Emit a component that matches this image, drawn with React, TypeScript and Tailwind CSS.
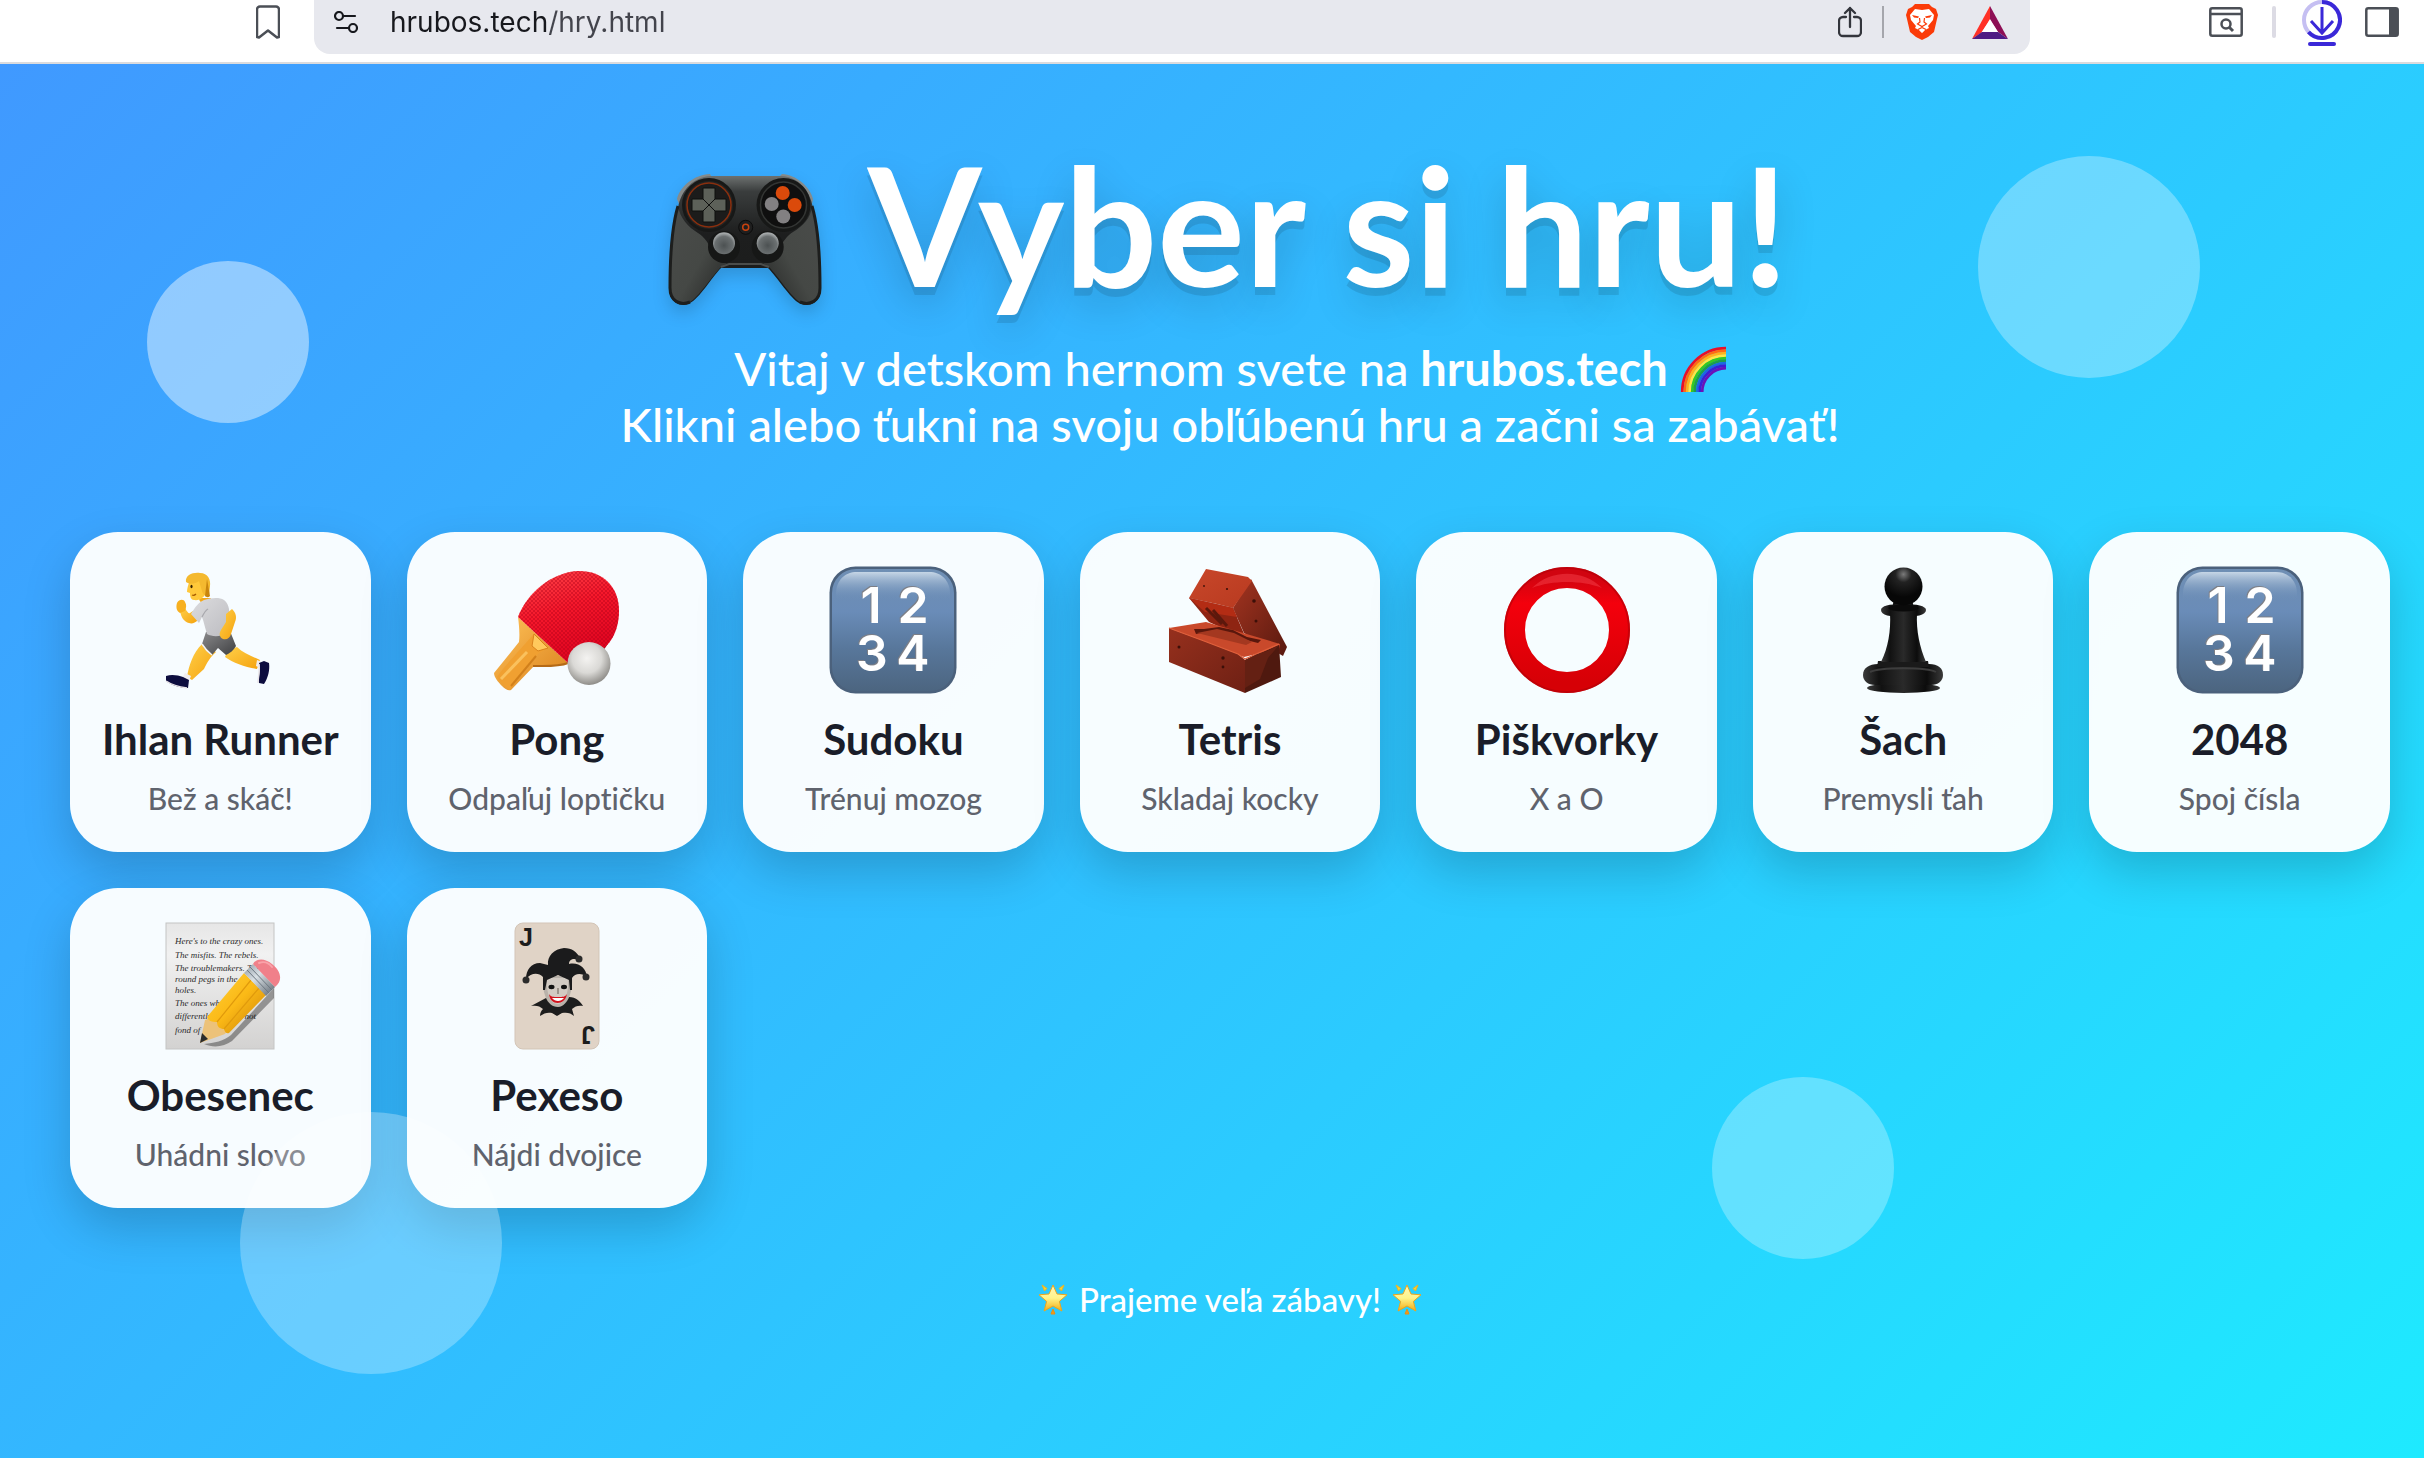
import type { ReactNode } from "react";

type Game = {
  name: string;
  desc: string;
  href: string;
  icon: ReactNode;
};

/* ---------- emoji pictures ---------- */

function Gamepad({ className }: { className?: string }) {
  return (
    <svg viewBox="0 0 160 160" className={className} aria-hidden="true">
      <defs>
        <linearGradient id="padTop" x1="0" y1="0" x2="0" y2="1">
          <stop offset="0" stopColor="#6d7170" />
          <stop offset="0.12" stopColor="#3a3d3d" />
          <stop offset="0.45" stopColor="#1d1e1e" />
          <stop offset="1" stopColor="#1b1c1b" />
        </linearGradient>
        <linearGradient id="padGripL" x1="0" y1="0" x2="1" y2="1">
          <stop offset="0" stopColor="#4a4c4a" />
          <stop offset="0.55" stopColor="#454845" />
          <stop offset="1" stopColor="#232423" />
        </linearGradient>
        <linearGradient id="padGripR" x1="1" y1="0" x2="0" y2="1">
          <stop offset="0" stopColor="#4a4c4a" />
          <stop offset="0.55" stopColor="#454845" />
          <stop offset="1" stopColor="#232423" />
        </linearGradient>
        <radialGradient id="padStick" cx="0.5" cy="0.6" r="0.55">
          <stop offset="0" stopColor="#4c5152" />
          <stop offset="0.75" stopColor="#6b7071" />
          <stop offset="1" stopColor="#a3a7a8" />
        </radialGradient>
      </defs>
      <path d="M13 39C16 26 30 15 46 14l2 4-20 12-13 14zM149 39c-3-13-17-24-31-25l-4 4 22 12 12 14z" fill="#858a8a" />
      <path
        d="M46 16h72c16 1 28 14 31 32 5 18 8 54 8 80 0 14-11 20-22 15-8-4-22-26-31-35H57c-9 9-22 31-31 35-10 5-21-1-21-15 0-26 3-62 9-80 3-18 16-31 32-32z"
        fill="url(#padTop)"
      />
      <path d="M14 46C8 66 6 100 6 128c0 13 10 18 20 14 8-4 22-26 31-35l6-4c-10 0-16-6-17-14-1-6-6-12-12-16C24 67 16 58 14 46z" fill="url(#padGripL)" />
      <path d="M148 46c6 20 8 54 8 82 0 13-10 18-20 14-8-4-22-26-31-35l-6-4c10 0 16-6 17-14 1-6 8-14 13-17 10-6 18-14 19-26z" fill="url(#padGripR)" />
      <path d="M14 46C8 66 6 100 6 128c0 13 10 18 20 14M148 46c6 20 8 54 8 82 0 13-10 18-20 14" fill="none" stroke="#1d1e1d" strokeWidth="3" />
      <path d="M57 107l8-3h32l8 3" fill="none" stroke="#4b4d4b" strokeWidth="2" />
      <circle cx="45" cy="45" r="27" fill="#171817" />
      <circle cx="45" cy="45" r="24" fill="#232423" />
      <circle cx="45" cy="45" r="22" fill="#1c1c1b" stroke="#8a2f0e" strokeWidth="1.5" />
      <g fill="#5d6159" stroke="#0f100f" strokeWidth="1" strokeLinejoin="round">
        <path d="M39 28h12v11l-6 6-6-6z" />
        <path d="M39 62h12V51l-6-6-6 6z" />
        <path d="M28 39h11l6 6-6 6H28z" />
        <path d="M62 39H51l-6 6 6 6h11z" />
      </g>
      <circle cx="119.500" cy="45" r="27" fill="#171817" />
      <circle cx="119.500" cy="45" r="23" fill="#0f0f0f" stroke="#333533" strokeWidth="1.500" />
      <circle cx="118.700" cy="33" r="7" fill="#db4a0b" />
      <circle cx="130.700" cy="45" r="7" fill="#db4a0b" />
      <circle cx="107.700" cy="44" r="7" fill="#828082" />
      <circle cx="119.300" cy="56.500" r="7" fill="#828082" />
      <circle cx="81.700" cy="67.300" r="7" fill="#1f1f1f" stroke="#0c0c0c" />
      <circle cx="81.700" cy="67.300" r="3" fill="none" stroke="#c8420f" strokeWidth="1.500" />
      <circle cx="60" cy="87" r="16" fill="#161716" />
      <circle cx="103.700" cy="87" r="16" fill="#161716" />
      <circle cx="60" cy="83.300" r="11" fill="url(#padStick)" />
      <circle cx="103.700" cy="83.300" r="11" fill="url(#padStick)" />
    </svg>
  );
}

function Rainbow({ className }: { className?: string }) {
  const bands = ["#e8102a", "#ff6a13", "#ffb21e", "#ffe545", "#35c921", "#1f9e4a", "#1a6ae0", "#3b1fd6", "#6b12b8"];
  return (
    <svg viewBox="0 0 46 46" className={className} aria-hidden="true">
      {bands.map((c, i) => {
        const r = 43.8 - i * 2.5;
        return <path key={c} d={`M${46 - r} 46A${r} ${r} 0 0 1 46 ${46 - r}`} fill="none" stroke={c} strokeWidth="2.7" />;
      })}
    </svg>
  );
}

function Star({ className }: { className?: string }) {
  return (
    <svg viewBox="0 0 32 32" className={className} aria-hidden="true">
      <defs>
        <linearGradient id="starFill" x1="0" y1="0" x2="0" y2="1">
          <stop offset="0" stopColor="#fff6b8" />
          <stop offset="0.5" stopColor="#fff48a" />
          <stop offset="1" stopColor="#f3ac15" />
        </linearGradient>
      </defs>
      <path d="M5 2l5 3.500-2.500 2.500zM27 2l-5 3.500 2.500 2.500z" fill="#f9d232" stroke="#eab526" strokeLinejoin="round" />
      <path d="M16 26l2 5h-4z" fill="#f09a18" stroke="#e88f14" strokeLinejoin="round" />
      <path
        d="M16 2l4 9 10 .8-7.600 6.600 2.500 9.600L16 23l-8.900 5 2.500-9.600L2 11.800l10-.8z"
        fill="url(#starFill)"
        stroke="#eda51c"
        strokeWidth="1"
        strokeLinejoin="round"
      />
    </svg>
  );
}

function Runner() {
  return (
    <svg viewBox="0 0 128 128" className="size-32" aria-hidden="true">
      <defs>
        <linearGradient id="skin" x1="0" y1="0" x2="1" y2="1">
          <stop offset="0" stopColor="#ffd04a" />
          <stop offset="1" stopColor="#f5a20d" />
        </linearGradient>
        <linearGradient id="shirt" x1="0" y1="0" x2="1" y2="1">
          <stop offset="0" stopColor="#dcdcde" />
          <stop offset="1" stopColor="#bdbdc2" />
        </linearGradient>
        <linearGradient id="shorts" x1="0" y1="0" x2="1" y2="1">
          <stop offset="0" stopColor="#8b8b8d" />
          <stop offset="1" stopColor="#3f4042" />
        </linearGradient>
      </defs>
      <path d="M72 84l9-3c6 6 14 9 23 13l-3 9c-12-2-24-6-32-12z" fill="url(#skin)" />
      <path d="M101 94l5 2-2 6-4-2z" fill="#f1eef0" />
      <path d="M103 97l5-2 5 2c1 7-1 15-5 21l-5-1c-1-4 2-13 0-20z" fill="#0d0d3f" />
      <path d="M103 98c1 7-1 14-1 19" fill="none" stroke="#e9e4e8" strokeWidth="1.500" />
      <path d="M46 78l14 8c-6 5-9 11-12 17l-12 11-5-3c2-12 6-24 15-33z" fill="url(#skin)" />
      <path d="M29 107l6 3-2 5-7-3z" fill="#f1eef0" />
      <path d="M10 110c5-2 12-1 17 1l6 3-1 8c-8 0-17-3-22-7z" fill="#0d0d3f" />
      <path d="M10 115c6 4 14 6 21 7" fill="none" stroke="#e9e4e8" strokeWidth="1.500" />
      <path d="M50 66l24-1c2 5 4 10 6 15-3 5-6 7-10 9l-8-7-6 7c-5-3-8-6-10-11z" fill="url(#shorts)" />
      <path d="M46 78c3 5 6 8 10 11" fill="none" stroke="#f4f4f4" strokeWidth="1.500" />
      <path d="M37 45l5 9c-3 3-6 4-9 3-5-1-8-6-9-12l5-3c2 4 4 6 5 5z" fill="url(#skin)" />
      <path d="M21 37c2-4 7-4 8-1 2 3 1 6 0 9l-5 2c-4-2-4-7-3-10z" fill="#f7b020" />
      <path d="M43 32h12c-1 4-3 6-6 5-4 0-6-2-6-5z" fill="#f3a91a" />
      <path d="M48 34c7-2 15-3 20 0 4 3 6 9 5 15l-2 18c-6 4-15 4-20 1-2-6-3-12-5-17l-3 6-8-9c4-7 8-12 13-14z" fill="url(#shirt)" />
      <path d="M46 51c2-4 4-7 6-8" fill="none" stroke="#a9a9ae" strokeWidth="1.200" />
      <path d="M70 48l6-5c4 4 5 8 3 13l-4 12c-1 4-4 6-8 5-4-2-4-6-2-9l5-8z" fill="url(#skin)" />
      <path d="M34 14c-2 5-3 9-3 12l3 1c0 4 1 7 4 7 6 1 11-3 13-9V12z" fill="#ffc83a" />
      <path d="M30 16C29 9 37 6 44 7c8 0 11 7 10 13l-1 9c-4 1-6 0-7-4l-3-10c-4 3-9 4-13 1z" fill="#f4b92f" />
      <path d="M51 13l3 17c-2 2-4 1-5 0z" fill="#c9850d" />
      <ellipse cx="35.500" cy="20.500" rx="1.100" ry="1.800" fill="#3a2300" />
      <path d="M36 29c2 1 3 0 4-1" fill="none" stroke="#a85c00" strokeWidth="1.300" />
    </svg>
  );
}

function Paddle() {
  return (
    <svg viewBox="0 0 128 128" className="size-32" aria-hidden="true">
      <defs>
        <linearGradient id="rubber" x1="0" y1="0" x2="0.400" y2="1">
          <stop offset="0" stopColor="#fd4a4d" />
          <stop offset="0.5" stopColor="#f6182b" />
          <stop offset="1" stopColor="#e00420" />
        </linearGradient>
        <linearGradient id="wood" x1="0" y1="0" x2="1" y2="1">
          <stop offset="0" stopColor="#ffc35a" />
          <stop offset="1" stopColor="#d9801b" />
        </linearGradient>
        <radialGradient id="ball" cx="0.45" cy="0.38" r="0.62">
          <stop offset="0" stopColor="#f4f3f1" />
          <stop offset="0.55" stopColor="#dad9d6" />
          <stop offset="1" stopColor="#8f8d89" />
        </radialGradient>
        <pattern id="dots" width="4" height="4" patternUnits="userSpaceOnUse">
          <circle cx="1" cy="1" r="0.900" fill="#b00018" opacity="0.6" />
          <circle cx="3" cy="3" r="0.900" fill="#b00018" opacity="0.6" />
        </pattern>
      </defs>
      <path d="M25 51L75 97c-10 4-22 3-33 2L18 124c-3 1-6-1-9-4-4-4-8-9-8-13l25-31c1-8 0-17-1-25z" fill="url(#wood)" />
      <path d="M41 68l14 14-9 5c-10 9-20 24-29 37-4-2-10-8-13-13 9-13 24-28 35-41z" fill="#f0a031" />
      <path d="M41 68l14 14-10 3-6-5z" fill="#ffc95c" stroke="#d9821c" strokeWidth="1" />
      <path d="M34 86L8 113" stroke="#ffcf70" strokeWidth="3" opacity="0.7" />
      <path d="M43 90L18 120" stroke="#c77412" strokeWidth="2" opacity="0.7" />
      <path d="M75 97c-10 4-22 3-35 3" fill="none" stroke="#b56a17" strokeWidth="2" />
      <path d="M120 61c-1 11-7 22-15 29l-28 6 5-9z" fill="#a80a1c" />
      <path d="M25 51C34 27 58 7 84 5c25-1 42 15 42 40 0 16-6 33-21 41l-30 11z" fill="url(#rubber)" />
      <path d="M25 51C34 27 58 7 84 5c25-1 42 15 42 40 0 16-6 33-21 41l-30 11z" fill="url(#dots)" />
      <circle cx="96" cy="97.500" r="21.500" fill="url(#ball)" />
    </svg>
  );
}

function Numbers() {
  return (
    <svg viewBox="0 0 128 128" className="size-32" aria-hidden="true">
      <defs>
        <linearGradient id="keyFill" x1="0" y1="0" x2="0" y2="1">
          <stop offset="0" stopColor="#6f8fb4" />
          <stop offset="0.35" stopColor="#6a8cb8" />
          <stop offset="0.65" stopColor="#58779b" />
          <stop offset="1" stopColor="#4c6580" />
        </linearGradient>
        <linearGradient id="keyShine" x1="0" y1="0" x2="0" y2="1">
          <stop offset="0" stopColor="#c6d6e6" />
          <stop offset="1" stopColor="#6b8db7" stopOpacity="0" />
        </linearGradient>
      </defs>
      <rect x="0.500" y="0.500" width="127" height="127" rx="26" fill="#4b617c" />
      <rect x="3" y="3" width="122" height="122" rx="24" fill="url(#keyFill)" />
      <path d="M7 34V28C7 14 16 6 28 6h72c12 0 21 8 21 22v6z" fill="url(#keyShine)" />
      <g
        fill="#fff"
        className="font-['Inter',sans-serif] text-[50px] font-semibold [text-shadow:-1px_-1px_0_#7d7f86]"
        textAnchor="middle"
      >
        <text x="42" y="57">1</text>
        <text x="84" y="57">2</text>
        <text x="43" y="105">3</text>
        <text x="84" y="105">4</text>
      </g>
    </svg>
  );
}

function Bricks() {
  return (
    <svg viewBox="0 0 128 128" className="size-32" aria-hidden="true">
      <defs>
        <linearGradient id="brickTop" x1="0" y1="0" x2="1" y2="1">
          <stop offset="0" stopColor="#c8472a" />
          <stop offset="1" stopColor="#b83a20" />
        </linearGradient>
        <linearGradient id="brickSide" x1="0" y1="0" x2="1" y2="1">
          <stop offset="0" stopColor="#a33420" />
          <stop offset="1" stopColor="#59190f" />
        </linearGradient>
        <linearGradient id="brickFront" x1="0" y1="0" x2="1" y2="1">
          <stop offset="0" stopColor="#96301d" />
          <stop offset="1" stopColor="#6e2014" />
        </linearGradient>
      </defs>
      <path d="M85 13l36 68-4 9-39-23-11-25z" fill="url(#brickSide)" />
      <path d="M40 3l42 8 4 4-19 27-16-4-28-6z" fill="url(#brickTop)" />
      <path d="M23 32l27 6 17 4 12 28-12-3-24-11z" fill="#8e2412" />
      <path d="M23 32l27 6 17 4 4 9-32-5z" fill="#b32c14" />
      <path d="M40 42l16 16M47 44l14 16" stroke="#5c180c" strokeWidth="3" />
      <path d="M3 62l37-6 74 22-1 5-35 8-40-15z" fill="#c9492b" />
      <path d="M28 63l10 0 15-2 14 3 14 7 14 3-3 3-12-3-12-6-18-4-20 4z" fill="#5a170c" />
      <path d="M31 67l20-4 17 4 18 9-6 3z" fill="#a43820" />
      <path d="M3 62l35 13 34 13 7 6v33L3 96z" fill="url(#brickFront)" />
      <path d="M113 79l2 32-36 16V94z" fill="#4f190f" />
      <path d="M113 79l-12 6-11 3-11 6v28l15-9 8-21z" fill="#642013" />
      <path d="M3 62l35 13 34 13 7 5 11-5 23-10" fill="none" stroke="#e0603c" strokeWidth="1.200" />
      <g fill="#3c0f08">
        <circle cx="13" cy="81" r="1.500" />
        <circle cx="57" cy="92" r="1.700" />
        <circle cx="57" cy="101" r="1.400" />
        <circle cx="88" cy="35" r="1.800" />
        <circle cx="90" cy="55" r="1.500" />
        <circle cx="38" cy="20" r="0.900" />
        <circle cx="61" cy="23" r="1.100" />
      </g>
    </svg>
  );
}

function RedCircle() {
  return (
    <svg viewBox="0 0 128 128" className="size-32" aria-hidden="true">
      <defs>
        <linearGradient id="ring" x1="0" y1="0" x2="0" y2="1">
          <stop offset="0" stopColor="#d10410" />
          <stop offset="0.250" stopColor="#f4000c" />
          <stop offset="1" stopColor="#d60006" />
        </linearGradient>
      </defs>
      <circle cx="64" cy="64" r="52.500" fill="none" stroke="url(#ring)" strokeWidth="21" />
      <circle cx="64" cy="64" r="62" fill="none" stroke="#b30009" strokeWidth="2" opacity="0.600" />
      <path d="M29 22C48 3 80 3 99 22c-20-8-50-8-70 0z" fill="#f5404a" opacity="0.500" />
    </svg>
  );
}

function Pawn() {
  return (
    <svg viewBox="0 0 128 128" className="size-32" aria-hidden="true">
      <defs>
        <radialGradient id="pawnHead" cx="0.500" cy="0.180" r="0.600">
          <stop offset="0" stopColor="#7a7a7a" />
          <stop offset="0.350" stopColor="#222" />
          <stop offset="1" stopColor="#070707" />
        </radialGradient>
        <linearGradient id="pawnBody" x1="0" y1="0" x2="1" y2="0">
          <stop offset="0" stopColor="#3a3a3a" />
          <stop offset="0.200" stopColor="#111" />
          <stop offset="0.500" stopColor="#2a2a2a" />
          <stop offset="0.800" stopColor="#0c0c0c" />
          <stop offset="1" stopColor="#3a3a3a" />
        </linearGradient>
      </defs>
      <ellipse cx="64.500" cy="122" rx="36.500" ry="5" fill="url(#pawnBody)" />
      <path d="M24 109c0-7 6-11 15-11h51c9 0 14 4 14 11 0 6-5 10-12 10H36c-7 0-12-4-12-10z" fill="url(#pawnBody)" />
      <path d="M31 106c10-5 57-5 66 0" stroke="#3d3d3d" strokeWidth="2" fill="none" />
      <path d="M38 101l1-6h50l1 6z" fill="#1a1a1a" />
      <path d="M51 47h27c-1 18 3 35 9 49H42c7-14 10-31 9-49z" fill="url(#pawnBody)" />
      <path d="M55 33h18l2 10H53z" fill="#0b0b0b" />
      <path d="M42 44c0-4 8-6 22-6s23 2 23 6c0 5-10 7-23 7s-22-2-22-7z" fill="url(#pawnBody)" />
      <ellipse cx="64.500" cy="42" rx="15" ry="3.500" fill="#0a0a0a" />
      <circle cx="64.500" cy="20.500" r="19" fill="url(#pawnHead)" />
    </svg>
  );
}

function Memo() {
  const lines: [number, string][] = [
    [22, "Here's to the crazy ones."],
    [36, "The misfits. The rebels."],
    [49, "The troublemakers. The"],
    [60, "round pegs in the"],
    [71, "holes."],
    [84, "The ones who see"],
    [97, "differently. They're not"],
    [111, "fond of"],
  ];
  return (
    <svg viewBox="0 0 128 128" className="size-32" aria-hidden="true">
      <defs>
        <linearGradient id="paper" x1="0" y1="0" x2="0" y2="1">
          <stop offset="0" stopColor="#e6e6e6" />
          <stop offset="0.250" stopColor="#f1f1f1" />
          <stop offset="1" stopColor="#d3d2d1" />
        </linearGradient>
        <linearGradient id="pencil" x1="0" y1="0" x2="1" y2="1">
          <stop offset="0" stopColor="#ffd23c" />
          <stop offset="0.500" stopColor="#fbb916" />
          <stop offset="1" stopColor="#c97f06" />
        </linearGradient>
        <linearGradient id="ferrule" x1="0" y1="0" x2="1" y2="1">
          <stop offset="0" stopColor="#8e99a3" />
          <stop offset="0.400" stopColor="#d9e0e5" />
          <stop offset="1" stopColor="#59626b" />
        </linearGradient>
      </defs>
      <rect x="10" y="1" width="108" height="126" fill="url(#paper)" stroke="#c4c4c4" />
      <g fill="#2b2b2b" className="font-['Liberation_Serif',serif] text-[9px] italic">
        {lines.map(([y, text]) => (
          <text key={y} x="19" y={y}>{text}</text>
        ))}
      </g>
      <path d="M48 122c10-1 20-3 27-9l43-47v10l-42 43c-8 6-19 7-28 3z" fill="#000" opacity="0.350" />
      <path d="M44 121l5-23 9-4 14 14-3 4z" fill="#ecc27a" />
      <path d="M44 121l2-10 6 6z" fill="#2b2b2b" />
      <path d="M88 51l22 22-37 38c-2 1-4 0-5-4-4 0-7-2-7-7-5 0-9-1-10-5z" fill="url(#pencil)" />
      <path d="M95 58l-34 42M103 66l-35 41" stroke="#e09a0c" strokeWidth="1.200" />
      <path d="M97 42l22 23-9 9-22-23z" fill="url(#ferrule)" />
      <path d="M94 45l22 23M91 48l22 23" stroke="#6d7780" strokeWidth="1" />
      <path d="M97 42c3-6 12-6 19 0 8 6 12 16 3 23z" fill="#f0808a" />
      <path d="M103 41c5-2 10 0 13 4" fill="none" stroke="#f9a3aa" strokeWidth="2" strokeLinecap="round" />
    </svg>
  );
}

function Joker() {
  return (
    <svg viewBox="0 0 128 128" className="size-32" aria-hidden="true">
      <rect x="22" y="1" width="84" height="126" rx="8" fill="#e0d3c6" stroke="#d3c5b7" />
      <g fill="#1c1c1c" className="font-['Liberation_Sans',sans-serif] text-[25px] font-bold">
        <text x="26" y="24">J</text>
        <text x="26" y="24" transform="rotate(180 64 64)">J</text>
      </g>
      <path d="M53 76l-15 8c5-1 9 0 12 3-2 2-3 4-3 7 4-3 8-4 12-3l5 3 5-3c5-1 9 0 12 3l-2-7c3-3 7-4 11-3-2-4-7-9-14-9z" fill="#1d1d1d" />
      <path d="M50 54h29c1 13-3 30-14 31-12 0-16-16-15-31z" fill="#b9b2aa" />
      <path d="M54 56h21c1 12-2 25-10 26-9 0-12-14-11-26z" fill="#d2cbc3" />
      <path
        d="M33 57c0-9 5-16 14-16l8 2c-1-9 6-16 16-17 8 0 13 4 16 10l-2 2c-4-2-9-1-9 4 10-2 17 4 18 13-5-4-12-4-15 1v12h-2l-1-10-11-5-11 5-2 10h-2V55c-5-5-12-4-17 2z"
        fill="#1b1b1c"
      />
      <circle cx="33" cy="58" r="3.500" fill="#2b2b2b" />
      <circle cx="86" cy="37" r="3.500" fill="#2b2b2b" />
      <circle cx="93" cy="55" r="3.500" fill="#2b2b2b" />
      <ellipse cx="58.500" cy="65" rx="3" ry="2.200" fill="#111" />
      <ellipse cx="71" cy="65" rx="3" ry="2.200" fill="#111" />
      <path d="M65 66v6" stroke="#9c948b" strokeWidth="2" />
      <path d="M56 72c1 12 16 12 18 0-2 3-4 3-9 3s-7 0-9-3z" fill="#d3121d" />
      <path d="M59 76c3 4 9 4 12 0z" fill="#fff" />
    </svg>
  );
}

/* ---------- toolbar icons ---------- */

function BraveLion() {
  return (
    <svg viewBox="0 0 32 36" className="h-9 w-8" aria-hidden="true">
      <path d="M9 0h14l3 3 4 2 2 6-1 4-3 13-6 5-6 3-6-3-6-5L1 15l-1-4 2-6 4-2z" fill="#fb3b08" />
      <path d="M9 5l7 1 7-1 5 6-1 5-5 6 1 2-4 2-3 3-3-3-4-2 1-2-5-6-1-5z" fill="#fff" />
      <path d="M6 11l7 1.500-1 1.500-4-.5zM26 11l-7 1.500 1 1.500 4-.5z" fill="#fb3b08" />
      <path d="M13.500 14l.5 4-2.500 2 4.500 2.500 4.500-2.500-2.500-2 .5-4" fill="none" stroke="#fb3b08" strokeWidth="1.200" />
      <path d="M16 22v2M12 25.500l4-2 4 2" fill="none" stroke="#fb3b08" strokeWidth="1.200" />
      <path d="M16 25l2.500 1.300L16 28.500l-2.500-2.200z" fill="#fff" />
    </svg>
  );
}

function BatTriangle() {
  return (
    <svg viewBox="0 0 36 33" className="h-[33px] w-9" aria-hidden="true">
      <path d="M18 0v14L9 27 0 33z" fill="#ff3127" />
      <path d="M18 0l18 33-10-7-8-12z" fill="#8e0f55" />
      <path d="M0 33l10-7h16l10 7z" fill="#4f1b83" />
      <path d="M18 13l8 13H10z" fill="#fff" />
    </svg>
  );
}

function Toolbar() {
  return (
    <header className="flex h-16 items-start border-b-2 border-[#dadbde] bg-white pl-64 pr-[25px]">
      <button type="button" aria-label="Záložka" className="flex h-11 w-6 items-center">
        <svg viewBox="0 0 24 34" className="h-[34px] w-6" fill="none" stroke="#4b4f56" strokeWidth="2.500" strokeLinejoin="round">
          <path d="M4 1.500h16a3 3 0 0 1 3 3V32l-2 .5-9-7-9 7-2-.5V4.500a3 3 0 0 1 3-3z" />
        </svg>
      </button>
      <div className="ml-[34px] flex h-[54px] flex-1 items-center rounded-b-2xl bg-[#e7e8ee] pb-[10px] pl-5 pr-[22px]">
        <button type="button" aria-label="Informácie o stránke" className="w-6">
          <svg viewBox="0 0 24 22" className="h-[22px] w-6" fill="none" stroke="#17181d" strokeWidth="2.200" strokeLinecap="round">
            <circle cx="5" cy="5" r="4" />
            <path d="M10 5h11" />
            <circle cx="19" cy="17" r="4" />
            <path d="M3 17h11" />
          </svg>
        </button>
        <input
          type="text"
          aria-label="Adresa"
          defaultValue="hrubos.tech/hry.html"
          className="ml-8 h-10 min-w-0 flex-1 bg-[linear-gradient(90deg,#17181d_157px,#43444c_157px)] bg-clip-text font-['Inter',sans-serif] text-[28px] leading-10 text-transparent outline-none"
        />
        <button type="button" aria-label="Zdieľať" className="w-6">
          <svg viewBox="0 0 24 32" className="h-8 w-6" fill="none" stroke="#33353c" strokeWidth="2.300" strokeLinecap="round" strokeLinejoin="round">
            <path d="M8 11H5a4 4 0 0 0-4 4v11a4 4 0 0 0 4 4h14a4 4 0 0 0 4-4V15a4 4 0 0 0-4-4h-3M12 21V2M7 7l5-5 5 5" />
          </svg>
        </button>
        <span className="ml-5 h-8 w-[2px] bg-[#a5a6ac]" />
        <button type="button" aria-label="Brave Shields" className="ml-[22px]">
          <BraveLion />
        </button>
        <button type="button" aria-label="Brave Rewards" className="ml-[34px]">
          <BatTriangle />
        </button>
      </div>
      <div className="ml-[179px] flex h-11 items-center">
        <button type="button" aria-label="Hľadať na karte">
          <svg viewBox="0 0 34 30" className="h-[30px] w-[34px]" fill="none" stroke="#4b4f56" strokeWidth="2.500">
            <rect x="1.300" y="1.300" width="31.400" height="27.400" rx="2" />
            <path d="M1 7h32" />
            <circle cx="17" cy="17" r="4.500" />
            <path d="M20 20l4 4" strokeWidth="3" />
          </svg>
        </button>
        <span className="ml-[29px] h-8 w-1 rounded-full bg-[#dcdbe4]" />
        <button type="button" aria-label="Stiahnuté súbory" className="ml-[26px]">
          <svg viewBox="0 0 40 48" className="h-12 w-10" fill="none" stroke="#3a28d8" strokeWidth="4">
            <circle cx="20" cy="22" r="18" stroke="#c5bff2" />
            <path d="M20 4a18 18 0 1 1-13.500 30" />
            <path d="M20 9v26M9 23l11 12 11-12" strokeWidth="3" />
            <path d="M8 46h24" strokeLinecap="round" />
          </svg>
        </button>
        <button type="button" aria-label="Bočný panel" className="ml-[23px]">
          <svg viewBox="0 0 34 30" className="h-[30px] w-[34px]">
            <rect x="1.300" y="1.300" width="31.400" height="27.400" rx="2" fill="#fff" stroke="#4b4f56" strokeWidth="2.500" />
            <path d="M24 1h7a2 2 0 0 1 2 2v24a2 2 0 0 1-2 2h-7z" fill="#4b4f56" />
          </svg>
        </button>
      </div>
    </header>
  );
}

/* ---------- page ---------- */

const games: Game[] = [
  { name: "Ihlan Runner", desc: "Bež a skáč!", href: "#runner", icon: <Runner /> },
  { name: "Pong", desc: "Odpaľuj loptičku", href: "#pong", icon: <Paddle /> },
  { name: "Sudoku", desc: "Trénuj mozog", href: "#sudoku", icon: <Numbers /> },
  { name: "Tetris", desc: "Skladaj kocky", href: "#tetris", icon: <Bricks /> },
  { name: "Piškvorky", desc: "X a O", href: "#piskvorky", icon: <RedCircle /> },
  { name: "Šach", desc: "Premysli ťah", href: "#sach", icon: <Pawn /> },
  { name: "2048", desc: "Spoj čísla", href: "#2048", icon: <Numbers /> },
  { name: "Obesenec", desc: "Uhádni slovo", href: "#obesenec", icon: <Memo /> },
  { name: "Pexeso", desc: "Nájdi dvojice", href: "#pexeso", icon: <Joker /> },
];

function GameCard({ game }: { game: Game }) {
  return (
    <a
      href={game.href}
      className="flex flex-col items-center rounded-[48px] bg-white/96 px-4 pb-9 pt-[34px] text-center shadow-[0_20px_48px_rgba(0,0,0,0.18)]"
    >
      {game.icon}
      <h2 className="mt-5 text-[42px] font-bold leading-[50px] text-[#1a1d29]">{game.name}</h2>
      <p className="mt-4 text-[30px] font-medium leading-9 text-[#5f636d]">{game.desc}</p>
    </a>
  );
}

export default function App() {
  return (
    <div className="flex min-h-screen flex-col font-['Lato','Open_Sans',sans-serif] [font-variant-ligatures:none]">
      <Toolbar />
      <main className="relative flex-1 overflow-hidden bg-[linear-gradient(135deg,#4099ff_0%,#1eeaff_100%)] pl-[70px] pr-[34px] pt-20 text-white">
        <div className="text-center">
          <h1 className="flex h-40 items-center justify-center gap-11 pr-2 text-[164px] font-bold leading-[160px] [text-shadow:0_8px_0_rgba(0,0,0,0.1),0_16px_40px_rgba(0,0,0,0.18)]">
            <Gamepad className="mt-8 size-40 drop-shadow-[0_8px_8px_rgba(0,0,0,0.15)]" />
            Vyber si hru!
          </h1>
          <p className="mt-9 text-[47px] font-medium leading-[56px]">
            Vitaj v detskom hernom svete na <strong className="font-bold">hrubos.tech</strong>{" "}
            <Rainbow className="inline size-[46px] align-[-6px]" />
            <br />
            Klikni alebo ťukni na svoju obľúbenú hru a začni sa zabávať!
          </p>
        </div>

        <div className="mt-20 grid grid-cols-[repeat(auto-fill,minmax(280px,1fr))] gap-9">
          {games.map((g) => (
            <GameCard key={g.name} game={g} />
          ))}
        </div>

        <footer className="mt-[71px] flex items-center justify-center gap-[10px] text-[33px] font-medium leading-10">
          <Star className="size-8" />
          Prajeme veľa zábavy!
          <Star className="size-8" />
        </footer>

        {/* floating bubbles, drawn over the cards */}
        <span className="pointer-events-none absolute left-[147px] top-[197px] size-[162px] rounded-full bg-white/44" />
        <span className="pointer-events-none absolute left-[1978px] top-[92px] size-[222px] rounded-full bg-white/30" />
        <span className="pointer-events-none absolute left-[1712px] top-[1013px] size-[182px] rounded-full bg-white/28" />
        <span className="pointer-events-none absolute left-[240px] top-[1048px] size-[262px] rounded-full bg-white/27" />
      </main>
    </div>
  );
}
